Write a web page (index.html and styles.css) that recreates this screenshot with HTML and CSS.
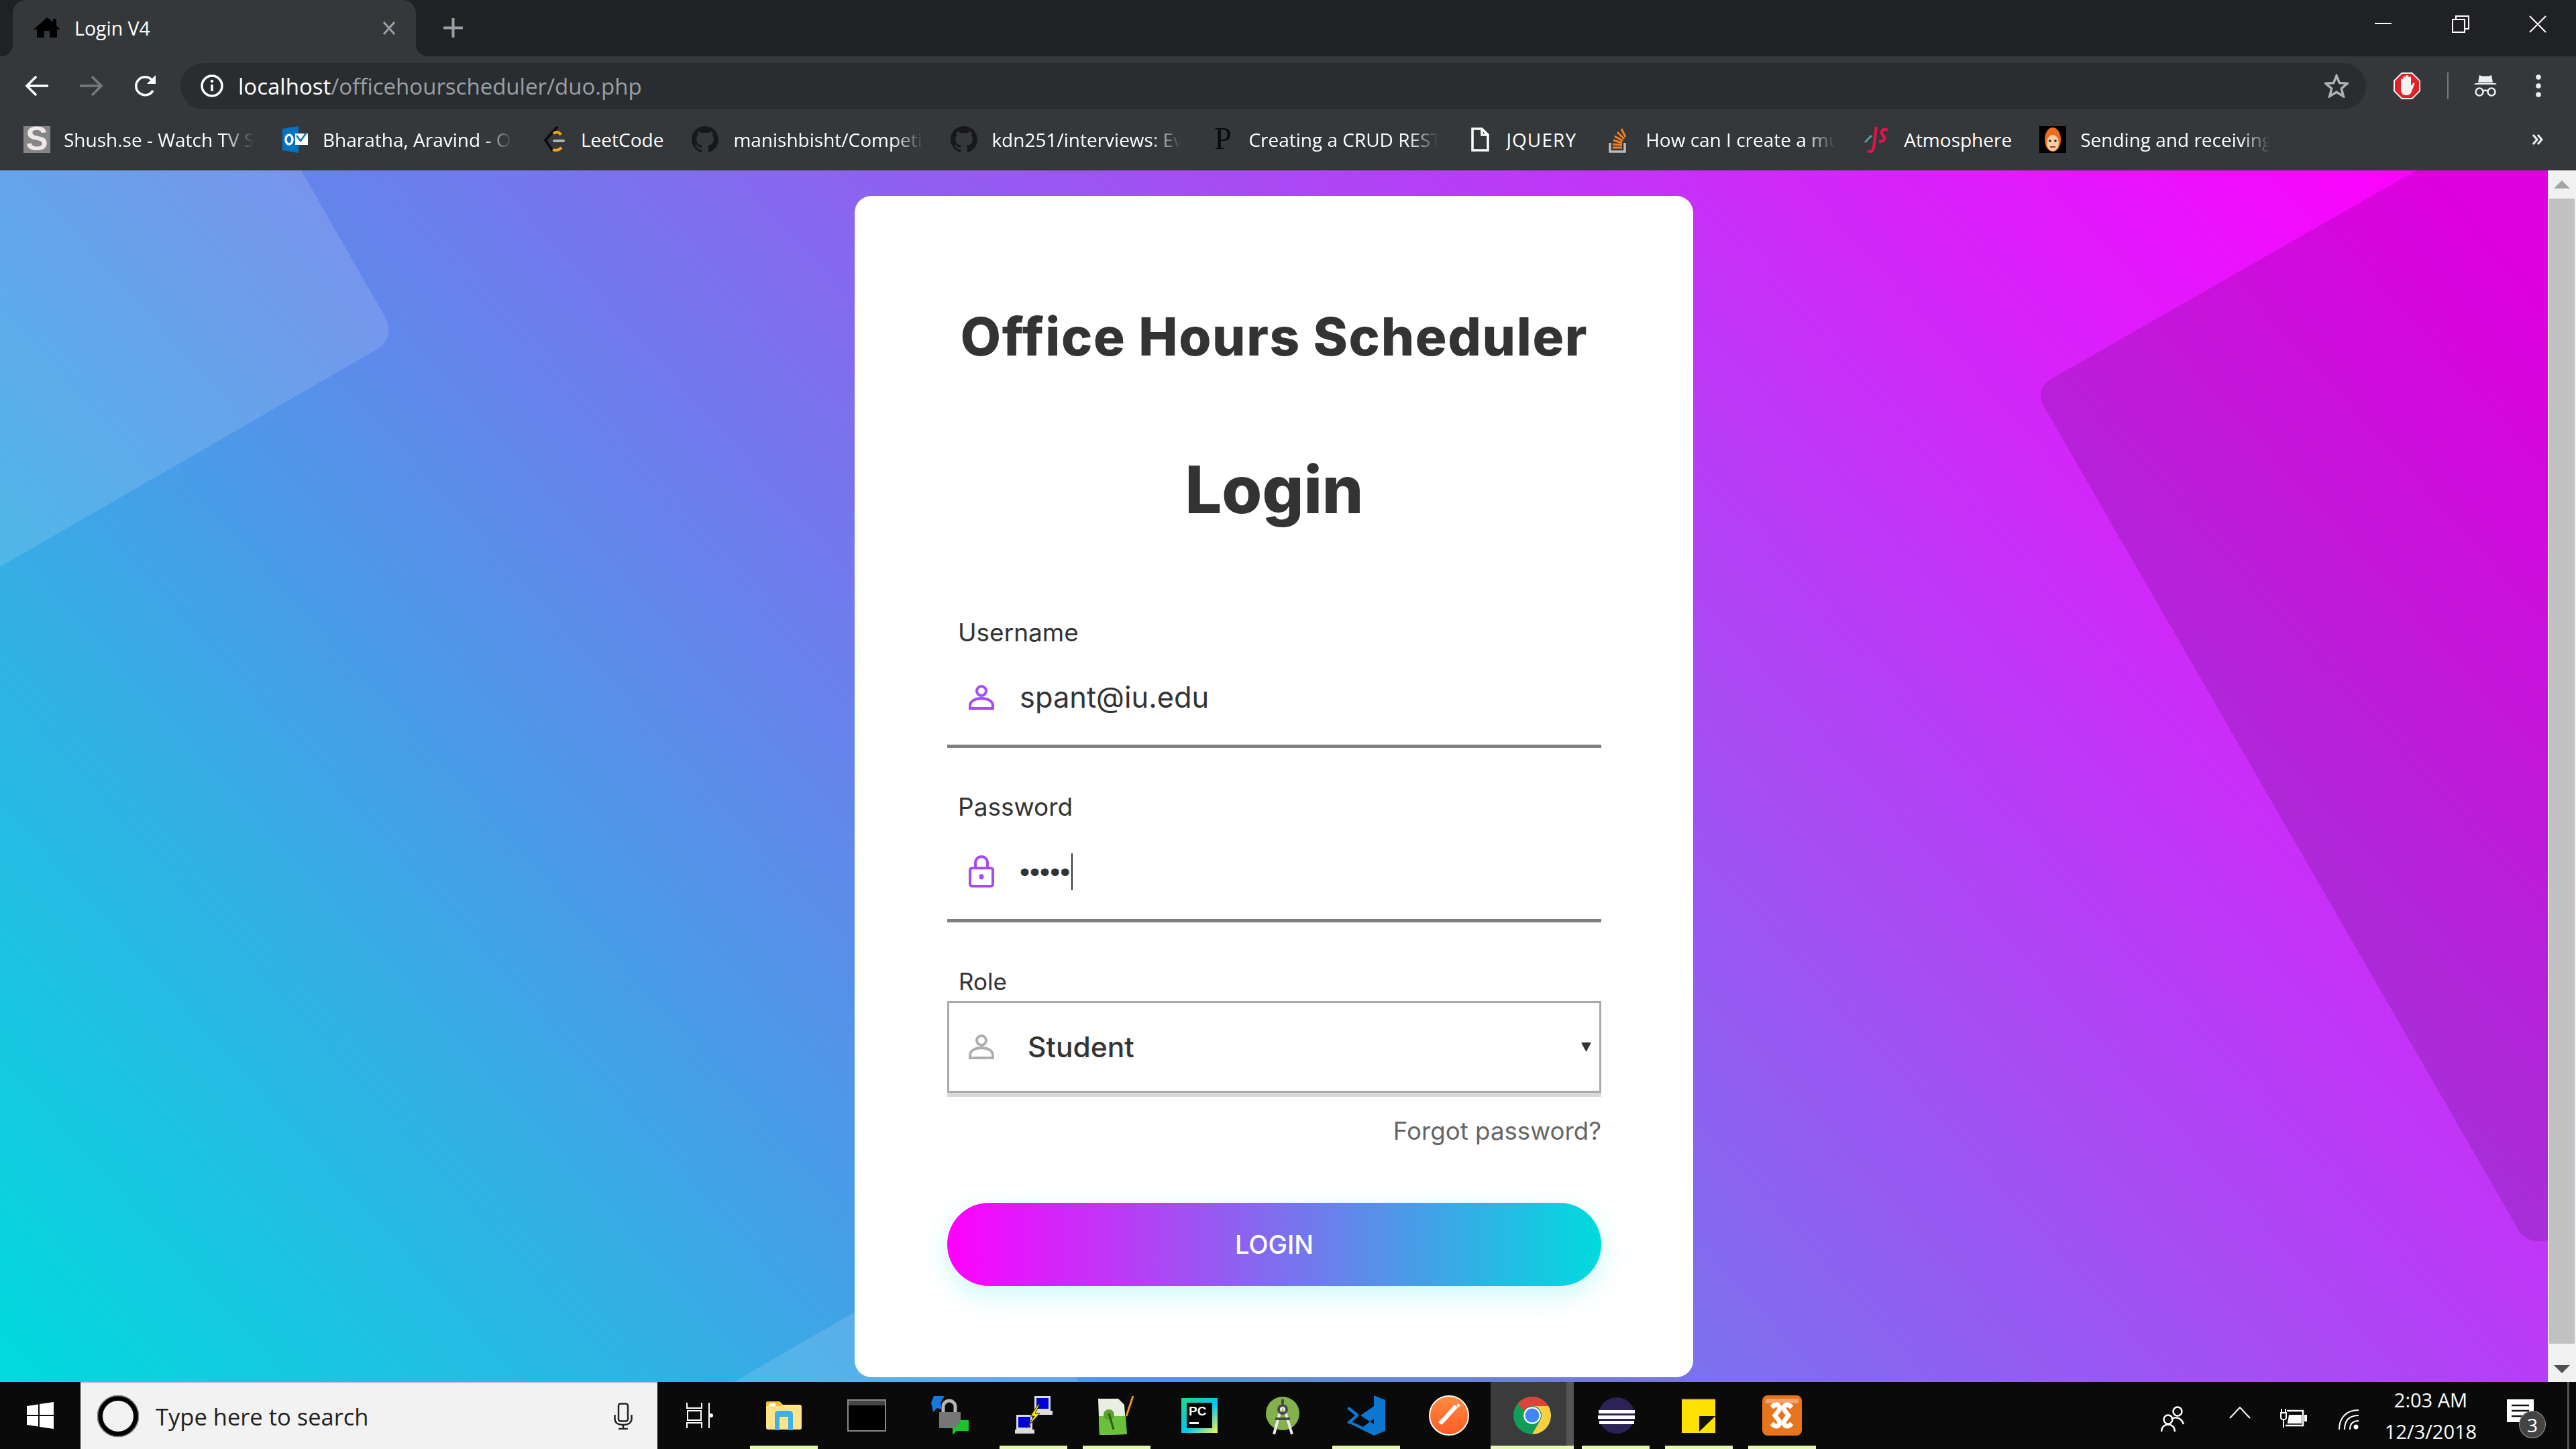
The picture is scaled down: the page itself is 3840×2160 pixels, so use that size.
FILE: index.html
```html
<!DOCTYPE html>
<html lang="en">
<head>
<meta charset="utf-8">
<title>Login V4</title>
<link rel="stylesheet" href="styles.css">
</head>
<body>
<div class="desktop">
  <header class="browser">
    <div class="tabstrip">
      <div class="tab">
        <svg class="fav-home" width="40" height="30" viewBox="0 0 40 30"><path d="M20 0l9 7V2h5v10l6 6h-5v12H24V20h-8v10H5V18H0z" fill="#000"/></svg>
        <span class="tab-title">Login V4</span>
        <svg class="tab-close" width="20" height="20" viewBox="0 0 20 20"><path d="M2 1l16 18M18 1L2 19" stroke="#9aa0a6" stroke-width="3"/></svg>
      </div>
      <svg class="new-tab" width="31" height="31" viewBox="0 0 31 31"><path d="M15.500 1v29M1 15.500h29" stroke="#9aa0a6" stroke-width="4"/></svg>
      <div class="winctl">
        <svg width="26" height="26" viewBox="0 0 26 26"><path d="M0 12h25" stroke="#fff" stroke-width="2"/></svg>
        <svg width="26" height="26" viewBox="0 0 26 26"><path d="M1 6h18v19H1zM6 6V1h19v19h-6" fill="none" stroke="#fff" stroke-width="2"/></svg>
        <svg width="26" height="26" viewBox="0 0 26 26"><path d="M1 1l24 24M25 1L1 25" stroke="#fff" stroke-width="2"/></svg>
      </div>
    </div>
    <div class="toolbar">
      <svg class="nav-back" width="34" height="32" viewBox="0 0 34 32"><path d="M34 16H3M16 2L2 16l14 14" fill="none" stroke="#fff" stroke-width="3.500"/></svg>
      <svg class="nav-fwd" width="34" height="32" viewBox="0 0 34 32"><path d="M0 16h31M18 2l14 14-14 14" fill="none" stroke="#77797b" stroke-width="3.500"/></svg>
      <svg class="nav-reload" width="34" height="34" viewBox="0 0 34 34"><path d="M28 24a13.500 13.500 0 1 1-1-15" fill="none" stroke="#fff" stroke-width="3.500"/><path d="M32 1v13H19z" fill="#fff"/></svg>
      <div class="omnibox">
        <svg width="34" height="34" viewBox="0 0 34 34"><circle cx="17" cy="17" r="15" fill="none" stroke="#fff" stroke-width="3.500"/><path d="M17 15v10" stroke="#fff" stroke-width="3.500"/><circle cx="17" cy="10" r="2.300" fill="#fff"/></svg>
        <div class="url"><span class="url-host">localhost</span><span class="url-path">/officehourscheduler/duo.php</span></div>
        <svg class="star" width="36" height="36" viewBox="0 0 36 36"><path d="M18 3l4.400 10.500 12 .9-9.100 7.600 2.900 11.500L18 27.300 7.800 33.500l2.900-11.500-9.100-7.600 12-.9z" fill="none" stroke="#aeb1b4" stroke-width="3.500"/></svg>
      </div>
      <svg class="abp" width="40" height="40" viewBox="0 0 40 40"><path d="M12 0h16l12 12v16L28 40H12L0 28V12z" fill="#f3f3f3"/><path d="M12.800 2h14.400L38 12.800v14.400L27.200 38H12.800L2 27.200V12.800z" fill="#e22127"/><path d="M11 22V10a2 2 0 0 1 3 0V8a2 2 0 0 1 4 0V6a2 2 0 0 1 4 0v2a2 2 0 0 1 4 0v12l3-4c2-1 3 0 2 2l-4 10c-1 4-4 6-8 6-5 0-8-3-8-8z" fill="#f2f2f2"/></svg>
      <span class="tb-sep"></span>
      <svg class="incog" width="34" height="32" viewBox="0 0 34 32"><path d="M8 0l4 1.500h10L26 0l2 11H6zM0 14h34l-2-2H2z" fill="#eee"/><circle cx="8" cy="25" r="5.500" fill="none" stroke="#eee" stroke-width="2.500"/><circle cx="26" cy="25" r="5.500" fill="none" stroke="#eee" stroke-width="2.500"/><path d="M13 24c2.500-1.500 5.500-1.500 8 0" fill="none" stroke="#eee" stroke-width="2.500"/></svg>
      <svg class="kebab" width="8" height="34" viewBox="0 0 8 34"><circle cx="4" cy="4" r="3.800" fill="#eee"/><circle cx="4" cy="17" r="3.800" fill="#eee"/><circle cx="4" cy="30" r="3.800" fill="#eee"/></svg>
    </div>
    <nav class="bookmarks">
      <a class="bm">
        <svg width="40" height="40" viewBox="0 0 40 40"><rect width="40" height="40" fill="#858585"/><text x="20" y="36" text-anchor="middle" font-family="Liberation Sans" font-weight="700" font-size="50" fill="#efe7ea">S</text></svg>
        <span class="bm-text fade">Shush.se - Watch TV Shows</span>
      </a>
      <a class="bm">
        <svg width="38" height="40" viewBox="0 0 38 40"><path d="M0 4l24-4v40L0 36z" fill="#0572c4"/><rect x="19" y="11" width="19" height="17" fill="#fff"/><path d="M21 14l6 8 8-11" fill="none" stroke="#0572c4" stroke-width="2.500"/><ellipse cx="10" cy="20" rx="5" ry="7" fill="none" stroke="#fff" stroke-width="3.500"/></svg>
        <span class="bm-text fade">Bharatha, Aravind - Outlook</span>
      </a>
      <a class="bm">
        <svg width="33" height="40" viewBox="0 0 33 40"><path d="M21 1L3 21l11 16" fill="none" stroke="#0d0d0d" stroke-width="4"/><path d="M15 11c4-3 8-3 11 2M14 35c5 2 9 1 13-3" fill="none" stroke="#f7a11c" stroke-width="4"/><rect x="14" y="20" width="18" height="4" rx="2" fill="#b3b3b3"/></svg>
        <span class="bm-text">LeetCode</span>
      </a>
      <a class="bm">
        <svg width="40" height="40" viewBox="0 0 16 16"><path d="M8 0C3.580 0 0 3.580 0 8c0 3.540 2.290 6.530 5.470 7.590.4.070.55-.17.55-.38 0-.19-.01-.82-.01-1.490-2.010.37-2.530-.49-2.690-.94-.09-.23-.48-.94-.82-1.130-.28-.15-.68-.52-.01-.53.63-.01 1.080.58 1.230.82.72 1.210 1.870.87 2.330.66.07-.52.28-.87.51-1.070-1.780-.2-3.640-.89-3.640-3.950 0-.87.31-1.590.82-2.150-.08-.2-.36-1.020.08-2.120 0 0 .67-.21 2.200.82.64-.18 1.320-.27 2-.27.68 0 1.360.09 2 .27 1.530-1.040 2.200-.82 2.200-.82.44 1.100.16 1.920.08 2.120.51.56.82 1.270.82 2.150 0 3.070-1.870 3.750-3.650 3.950.29.25.54.73.54 1.480 0 1.070-.01 1.930-.01 2.200 0 .21.15.46.55.38A8.013 8.013 0 0 0 16 8c0-4.420-3.580-8-8-8z" fill="#18181b"/></svg>
        <span class="bm-text fade">manishbisht/Competitive</span>
      </a>
      <a class="bm">
        <svg width="40" height="40" viewBox="0 0 16 16"><path d="M8 0C3.580 0 0 3.580 0 8c0 3.540 2.290 6.530 5.470 7.590.4.070.55-.17.55-.38 0-.19-.01-.82-.01-1.490-2.010.37-2.530-.49-2.690-.94-.09-.23-.48-.94-.82-1.130-.28-.15-.68-.52-.01-.53.63-.01 1.080.58 1.230.82.72 1.210 1.870.87 2.330.66.07-.52.28-.87.51-1.070-1.780-.2-3.640-.89-3.640-3.950 0-.87.31-1.590.82-2.150-.08-.2-.36-1.020.08-2.120 0 0 .67-.21 2.200.82.64-.18 1.320-.27 2-.27.68 0 1.360.09 2 .27 1.530-1.040 2.200-.82 2.200-.82.44 1.100.16 1.920.08 2.120.51.56.82 1.270.82 2.150 0 3.070-1.870 3.750-3.650 3.950.29.25.54.73.54 1.480 0 1.070-.01 1.930-.01 2.200 0 .21.15.46.55.38A8.013 8.013 0 0 0 16 8c0-4.420-3.580-8-8-8z" fill="#18181b"/></svg>
        <span class="bm-text fade">kdn251/interviews: Everything</span>
      </a>
      <a class="bm">
        <svg width="28" height="40" viewBox="0 0 28 40"><text x="14" y="34" text-anchor="middle" font-family="Liberation Serif" font-size="46" fill="#0a0a0a">P</text></svg>
        <span class="bm-text fade">Creating a CRUD RESTful API</span>
      </a>
      <a class="bm">
        <svg width="27" height="36" viewBox="0 0 27 36"><path d="M2 2h14l9 9v23H2zM16 2v9h9" fill="none" stroke="#fff" stroke-width="3.500"/></svg>
        <span class="bm-text bm-caps">JQUERY</span>
      </a>
      <a class="bm">
        <svg width="28" height="40" viewBox="0 0 28 40"><path d="M2 25v13h22V25" fill="none" stroke="#bcbbbb" stroke-width="3.500"/><path d="M6 32h14M6 27l14 1M7 21l13 4M9 15l12 7M13 9l10 10M19 4l6 12" stroke="#f48024" stroke-width="3"/></svg>
        <span class="bm-text fade">How can I create a multipart</span>
      </a>
      <a class="bm">
        <svg width="36" height="40" viewBox="0 0 36 40"><path d="M18 1L14 32c-1 6-5 7-9 5" fill="none" stroke="#e8124f" stroke-width="4"/><path d="M35 6c-9-4-11 4-7 8s3 9-6 9" fill="none" stroke="#e8124f" stroke-width="4"/><path d="M1 24l10-10" stroke="#4fa3a8" stroke-width="3"/></svg>
        <span class="bm-text">Atmosphere</span>
      </a>
      <a class="bm">
        <svg width="40" height="40" viewBox="0 0 40 40"><rect width="40" height="40" fill="#000"/><ellipse cx="20" cy="20" rx="12" ry="18" fill="#ef6c1a"/><ellipse cx="20" cy="25" rx="9" ry="12" fill="#fbcfa0"/><circle cx="16" cy="22" r="1.800" fill="#222"/><circle cx="24" cy="22" r="1.800" fill="#222"/><path d="M16 31h8" stroke="#a33" stroke-width="2"/></svg>
        <span class="bm-text fade">Sending and receiving messages</span>
      </a>
      <svg class="bm-more" width="16" height="16" viewBox="0 0 16 16"><path d="M1 1l6 7-6 7M8 1l6 7-6 7" fill="none" stroke="#eee" stroke-width="3"/></svg>
    </nav>
  </header>

  <div class="viewport">
    <main class="page">
      <svg class="bg-shapes" viewBox="0 0 3798 1806" preserveAspectRatio="none">
        <path class="shape-light" d="M0 0H449L572 215Q592 250 558 269L0 591Z"/>
        <path class="shape-light" d="M1094 1806L1450 1600L1608 1806Z"/>
        <path class="shape-dark" d="M3602 0H3800V1595Q3770 1600 3757 1584L3048 354Q3032 326 3059 310Z"/>
      </svg>
      <form class="card">
        <h1 class="app-title">Office Hours Scheduler</h1>
        <h2 class="login-title">Login</h2>

        <div class="field">
          <div class="field-label">Username</div>
          <div class="field-row">
            <svg class="field-icon" width="38" height="37" viewBox="0 0 38 37"><circle cx="19" cy="9" r="7" fill="none" stroke="currentColor" stroke-width="4"/><path d="M2 35v-4c0-7 8-11 17-11s17 4 17 11v4z" fill="none" stroke="currentColor" stroke-width="4"/></svg>
            <span class="field-value">spant@iu.edu</span>
          </div>
        </div>

        <div class="field">
          <div class="field-label">Password</div>
          <div class="field-row">
            <svg class="field-icon" width="38" height="48" viewBox="0 0 38 48"><path d="M10 20v-9a9 9 0 0 1 18 0v9" fill="none" stroke="currentColor" stroke-width="4"/><rect x="2" y="19" width="34" height="27" rx="3" fill="none" stroke="currentColor" stroke-width="4"/><ellipse cx="19" cy="32" rx="3.500" ry="4" fill="currentColor"/></svg>
            <span class="field-dots">•••••</span><span class="caret"></span>
          </div>
        </div>

        <div class="field">
          <div class="field-label field-label-role">Role</div>
          <div class="select">
            <svg class="select-icon" width="38" height="37" viewBox="0 0 38 37"><circle cx="19" cy="9" r="7" fill="none" stroke="currentColor" stroke-width="4"/><path d="M2 35v-4c0-7 8-11 17-11s17 4 17 11v4z" fill="none" stroke="currentColor" stroke-width="4"/></svg>
            <span class="select-value">Student</span>
            <svg class="select-arrow" width="15" height="14" viewBox="0 0 15 14"><path d="M0 0h15L7.500 14z" fill="#333"/></svg>
          </div>
        </div>

        <a class="forgot">Forgot password?</a>
        <button class="login-btn" type="button">LOGIN</button>
      </form>
    </main>
    <aside class="scrollbar">
      <div class="sb-btn"><svg width="24" height="12" viewBox="0 0 24 12"><path d="M0 12L12 0l12 12z" fill="#a3a3a3"/></svg></div>
      <div class="sb-thumb"></div>
      <div class="sb-btn sb-btn-down"><svg width="24" height="12" viewBox="0 0 24 12"><path d="M0 0l12 12L24 0z" fill="#505050"/></svg></div>
    </aside>
  </div>

  <footer class="taskbar">
    <div class="start">
      <svg width="40" height="40" viewBox="0 0 40 40"><path d="M0 6l17-2.500V19H0zM19 3L40 0v19H19zM0 21h17v15.500L0 34zM19 21h21v19l-21-3z" fill="#fff"/></svg>
    </div>
    <div class="search">
      <svg class="cortana" width="62" height="64" viewBox="0 0 62 64"><circle cx="31" cy="32" r="27" fill="none" stroke="#000" stroke-width="8"/><circle cx="31" cy="32" r="30.500" fill="none" stroke="#808080" stroke-width="1.500"/></svg>
      <span class="search-text">Type here to search</span>
      <svg class="mic" width="28" height="40" viewBox="0 0 28 40"><rect x="7" y="1.500" width="14" height="26" rx="3" fill="none" stroke="#222" stroke-width="2.500"/><path d="M1.500 18v6c0 6 5 9 12.500 9s12.500-3 12.500-9v-6M14 33v5M7 39h14" fill="none" stroke="#222" stroke-width="2.500"/></svg>
    </div>
    <div class="taskview">
      <svg width="40" height="40" viewBox="0 0 40 40"><path d="M1 1v8h22V1M1 39v-8h22v8M2 13h20v14H2zM34 1v38" fill="none" stroke="#fff" stroke-width="2"/><circle cx="37" cy="20" r="3" fill="#fff"/></svg>
    </div>
    <div class="apps">
      <div class="app app-on"><svg width="53" height="44" viewBox="0 0 53 44"><path d="M0 4a3 3 0 0 1 3-3h17l5 5h25a3 3 0 0 1 3 3v31a3 3 0 0 1-3 3H3a3 3 0 0 1-3-3z" fill="#ffe388"/><path d="M0 4a3 3 0 0 1 3-3h17l4 7H0z" fill="#f7c033"/><rect x="4" y="4" width="10" height="4" fill="#fff"/><path d="M13 44V20a5 5 0 0 1 5-5h17a5 5 0 0 1 5 5v24h-7V24H20v20z" fill="#3eb2e8"/></svg></div>
      <div class="app"><svg width="58" height="48" viewBox="0 0 58 48"><rect x="1" y="1" width="56" height="46" fill="#000" stroke="#8a8a8a" stroke-width="2"/><rect x="2" y="2" width="54" height="7" fill="#454545"/></svg></div>
      <div class="app"><svg width="56" height="58" viewBox="0 0 56 58"><path d="M18 24v-8a9 9 0 0 1 18 0v8" fill="none" stroke="#b5b5b5" stroke-width="5"/><rect x="12" y="24" width="32" height="24" fill="#767676"/><path d="M0 10L4 0h16l-6 10 2 10-7-2-6 6z" fill="#1778e0"/><path d="M56 36v16H38l-6 6 0-10 6-2 6-10z" fill="#17c52c"/></svg></div>
      <div class="app app-on"><svg width="57" height="58" viewBox="0 0 57 58"><path d="M30 0h24v22h3v6H31v-6h-1z" fill="#ddd"/><rect x="33" y="3" width="18" height="16" fill="#0000d8"/><path d="M3 28h24v22h3v6H1v-6h2z" fill="#ddd"/><rect x="6" y="31" width="18" height="16" fill="#0000d8"/><path d="M36 12L24 30h6L18 48l20-22h-7l7-14z" fill="#ffe600" stroke="#222" stroke-width="1"/></svg></div>
      <div class="app app-on"><svg width="55" height="58" viewBox="0 0 55 58"><path d="M0 4h30l9 9 3 44-40 1z" fill="#e8efe2"/><path d="M1 30h40l2 27-41 1z" fill="#6cc13c"/><circle cx="16" cy="28" r="8" fill="#5aa32c"/><path d="M16 26l7 24" stroke="#2d5a12" stroke-width="3"/><path d="M52 0L42 30" stroke="#e59a1c" stroke-width="3"/></svg></div>
      <div class="app"><svg width="54" height="52" viewBox="0 0 54 52"><defs><linearGradient id="pc" x1="0" y1="0" x2="1" y2="1"><stop offset="0" stop-color="#21d789"/><stop offset=".55" stop-color="#07c3f2"/><stop offset="1" stop-color="#fcf84a"/></linearGradient></defs><rect width="54" height="52" fill="url(#pc)"/><rect x="8" y="7" width="38" height="38" fill="#000"/><text x="11" y="26" font-family="Liberation Sans" font-weight="700" font-size="19" fill="#fff">PC</text><rect x="12" y="36" width="14" height="3" fill="#fff"/></svg></div>
      <div class="app"><svg width="50" height="58" viewBox="0 0 50 58"><circle cx="25" cy="26" r="25" fill="#83b14c"/><path d="M25 10l-13 47M25 10l14 47" stroke="#ececec" stroke-width="4" fill="none"/><circle cx="25" cy="20" r="6" fill="none" stroke="#4a4a4a" stroke-width="4"/><path d="M25 5v8M14 34h22" stroke="#4a4a4a" stroke-width="4"/></svg></div>
      <div class="app app-on"><svg width="57" height="60" viewBox="0 0 57 60"><path d="M40 0l17 7v46l-17 7L0 40l4-2 20 9 16-12zM40 16L20 30l20 13z" fill="#0a78d1" fill-rule="evenodd"/><path d="M3 17l-3 3 12 10-12 10 3 3 14-12v-3z" fill="#0a78d1"/></svg></div>
      <div class="app"><svg width="60" height="60" viewBox="0 0 60 60"><defs><linearGradient id="pm" x1="0" y1="0" x2="0" y2="1"><stop offset="0" stop-color="#ff8c42"/><stop offset="1" stop-color="#ff5a24"/></linearGradient></defs><circle cx="30" cy="30" r="29" fill="url(#pm)" stroke="#fff" stroke-width="2"/><path d="M38 14L20 34l-6 6 5 4 6-6 18-20zM44 12l3 3-3 3-3-3z" fill="#fff"/></svg></div>
      <div class="app app-active app-on"><svg width="56" height="56" viewBox="0 0 48 48"><circle cx="24" cy="24" r="24" fill="#0f9d58"/><path d="M24 0a24 24 0 0 1 20.800 12H24a12 12 0 0 0-10.400 6L5.600 8.600A24 24 0 0 1 24 0z" fill="#db4437"/><path d="M44.800 12A24 24 0 0 1 24 48l10.400-18A12 12 0 0 0 24 12z" fill="#ffcd40"/><circle cx="24" cy="24" r="11" fill="#fff"/><circle cx="24" cy="24" r="9" fill="#4285f4"/></svg></div>
      <div class="app app-on"><svg width="58" height="58" viewBox="0 0 58 58"><path d="M29 0a29 29 0 0 0 0 58A29 29 0 0 1 29 0z" fill="#f7941e"/><circle cx="31" cy="29" r="27" fill="#2c2255"/><path d="M4 21h54v5H4zM3 29h55v5H3zM5 37h52v5H5z" fill="#fff"/></svg></div>
      <div class="app app-on"><svg width="50" height="52" viewBox="0 0 50 52"><rect width="50" height="52" fill="#ffe100"/><rect width="50" height="2" fill="#222"/><path d="M26 50V27h24z" fill="#111"/></svg></div>
      <div class="app app-on"><svg width="59" height="60" viewBox="0 0 59 60"><rect width="59" height="60" rx="8" fill="#e8741e"/><path d="M5 5h49v7H5z" fill="#f2a46a"/><path d="M14 18c8-8 14-2 11 4l-6 8 6 8c3 6-3 12-11 4M44 18c-8-8-14-2-11 4l6 8-6 8c-3 6 3 12 11 4" fill="none" stroke="#fff" stroke-width="7"/></svg></div>
    </div>
    <div class="tray">
      <svg class="tray-people" width="36" height="38" viewBox="0 0 36 38"><circle cx="25" cy="8" r="6.500" fill="none" stroke="#fff" stroke-width="2.500"/><path d="M16 20c2-4 14-5 18 7" fill="none" stroke="#fff" stroke-width="2.500"/><circle cx="11" cy="20" r="6.500" fill="none" stroke="#fff" stroke-width="2.500"/><path d="M1 38c0-14 20-14 20 0" fill="none" stroke="#fff" stroke-width="2.500"/></svg>
      <svg class="tray-chev" width="32" height="18" viewBox="0 0 32 18"><path d="M1 17L16 1l15 16" fill="none" stroke="#fff" stroke-width="2"/></svg>
      <svg class="tray-bat" width="40" height="28" viewBox="0 0 40 28"><path d="M10 3h24v22H8" fill="none" stroke="#fff" stroke-width="2.500"/><path d="M13 9h19v13H11z" fill="#fff"/><rect x="36" y="9" width="4" height="10" fill="#fff"/><path d="M2 0v6M8 0v6M1 6h8v7c0 2-2 3-4 3s-4-1-4-3zM5 16v12" fill="none" stroke="#fff" stroke-width="2"/></svg>
      <svg class="tray-wifi" width="30" height="30" viewBox="0 0 30 30"><path d="M1 30C1 12 12 1 30 1M9 30C9 16 16 9 30 9M17 30c0-9 4-13 13-13" fill="none" stroke="#fff" stroke-width="2"/><circle cx="26" cy="26" r="3.500" fill="#fff"/></svg>
      <div class="clock"><span>2:03 AM</span><span>12/3/2018</span></div>
      <div class="notif">
        <svg width="40" height="34" viewBox="0 0 40 34"><path d="M0 0h40v34H0z" fill="#fff"/><path d="M7 9h26M7 17h26M7 25h26" stroke="#111" stroke-width="2.500"/></svg>
        <span class="notif-badge">3</span>
      </div>
      <span class="tray-edge"></span>
    </div>
  </footer>
</div>
</body>
</html>
```
FILE: styles.css
```css
* { box-sizing: border-box; }
html, body { margin: 0; height: 100%; overflow: hidden; }
.desktop { height: 100vh; display: flex; flex-direction: column; font-family: "Open Sans", sans-serif; }

/* Browser chrome */
.browser { height: 254px; flex: none; background: #35383b; color: #fff; }
.tabstrip { height: 84px; background: #202124; display: flex; align-items: center; padding-left: 19px; }
.tab { position: relative; width: 601px; height: 84px; background: #35383b; border-radius: 20px 20px 0 0; display: flex; align-items: center; padding: 0 30px 0 31px; }
.tab::before, .tab::after { content: ""; position: absolute; bottom: 0; width: 18px; height: 18px; }
.tab::before { left: -18px; background: radial-gradient(circle at 0 0, transparent 18px, #35383b 18.500px); }
.tab::after { right: -18px; background: radial-gradient(circle at 100% 0, transparent 18px, #35383b 18.500px); }
.fav-home { flex: none; margin-top: -2px; }
.tab-title { font-size: 28.500px; margin-left: 21px; flex: 1; }
.tab-close { flex: none; }
.new-tab { flex: none; margin-left: 40px; margin-top: -2px; }
.winctl { margin-left: auto; display: flex; gap: 89px; padding-right: 44px; margin-top: -12px; }

.toolbar { height: 88px; display: flex; align-items: center; padding-left: 38px; }
.nav-fwd { margin-left: 47px; }
.nav-reload { margin-left: 47px; }
.omnibox { width: 3258px; height: 69px; margin-left: 35px; background: #2a2d30; border-radius: 35px; display: flex; align-items: center; padding-left: 30px; padding-right: 26px; }
.url { font-size: 33px; margin-left: 22px; flex: 1; white-space: nowrap; }
.url-host { color: #fff; }
.url-path { color: #9ba0a5; }
.abp { margin-left: 41px; flex: none; }
.tb-sep { width: 2px; height: 40px; background: #77797b; margin-left: 40px; flex: none; }
.incog { margin-left: 38px; flex: none; }
.kebab { margin-left: 58px; flex: none; }

.bookmarks { height: 82px; display: flex; align-items: center; padding: 0 49px 10px 35px; }
.bm { display: flex; align-items: center; flex: none; color: #fff; }
.bm-text { font-size: 28px; white-space: nowrap; overflow: hidden; max-width: 283px; line-height: 40px; }
.bm-caps { letter-spacing: 1.100px; }
.fade { width: 283px; -webkit-mask-image: linear-gradient(to right, #000 84%, transparent 100%); mask-image: linear-gradient(to right, #000 84%, transparent 100%); }
.bm-more { margin-left: auto; flex: none; }
/* Favicon-to-label gaps and spacing between bookmarks */
.bm:nth-child(1) svg { margin-right: 20px; }
.bm:nth-child(2) { margin-left: 43px; }
.bm:nth-child(2) svg { margin-right: 22px; }
.bm:nth-child(3) { margin-left: 46px; }
.bm:nth-child(3) svg { margin-right: 23px; }
.bm:nth-child(4) { margin-left: 42px; }
.bm:nth-child(4) svg { margin-right: 22px; }
.bm:nth-child(5) { margin-left: 41px; }
.bm:nth-child(5) svg { margin-right: 21px; }
.bm:nth-child(6) { margin-left: 48px; }
.bm:nth-child(6) svg { margin-right: 24px; }
.bm:nth-child(7) { margin-left: 49px; }
.bm:nth-child(7) svg { margin-right: 25px; }
.bm:nth-child(8) { margin-left: 48px; }
.bm:nth-child(8) svg { margin-right: 27px; }
.bm:nth-child(9) { margin-left: 43px; }
.bm:nth-child(9) svg { margin-right: 23px; }
.bm:nth-child(10) { margin-left: 41px; }
.bm:nth-child(10) svg { margin-right: 21px; }

/* Page */
.viewport { flex: 1; min-height: 0; display: flex; }
.page { flex: 1; min-width: 0; position: relative; overflow: hidden; padding-top: 38px; display: flex; justify-content: center; align-items: flex-start; background: linear-gradient(48deg, #00dbde 0%, #ff00ff 97%); }
.bg-shapes { position: absolute; left: 0; top: 0; width: 100%; height: 100%; }
.shape-light { fill: rgba(255, 255, 255, .13); }
.shape-dark { fill: rgba(0, 0, 0, .13); }

.scrollbar { width: 42px; flex: none; background: #f1f1f1; display: flex; flex-direction: column; padding: 0 2px; }
.sb-btn { height: 42px; flex: none; display: flex; align-items: center; justify-content: center; }
.sb-btn-down { height: 57px; align-items: flex-end; padding-bottom: 13px; }
.sb-thumb { flex: 1; background: #c1c1c1; }

/* Card */
.card { position: relative; width: 1250px; background: #fff; border-radius: 25px; padding: 160px 137px 136px 138px; font-family: Inter, sans-serif; color: #333; }
.app-title { margin: 0; text-align: center; font-size: 78px; line-height: 100px; font-weight: 800; letter-spacing: 1.600px; white-space: nowrap; }
.login-title { margin: 118px 0 128px; text-align: center; font-size: 97px; line-height: 120px; font-weight: 800; }
.field + .field { margin-top: 63px; }
.field-label { font-size: 37px; line-height: 50px; padding-left: 16px; }
.field-label-role { font-size: 35px; padding-left: 17px; }
.field-row { height: 147px; border-bottom: 5px solid #808080; display: flex; align-items: center; padding-left: 32px; }
.field-icon { color: #a64bf4; flex: none; }
.field-value { margin-left: 38px; font-size: 43.400px; line-height: 50px; }
.field-dots { margin-left: 38px; font-family: "Liberation Sans", sans-serif; font-size: 43px; line-height: 50px; }
.caret { width: 2px; height: 55px; background: #333; margin-left: 2px; }
.select { margin-top: 4px; height: 137px; border: 3px solid #a9a9a9; box-shadow: 0 6px 0 #d9d9d9; display: flex; align-items: center; padding: 0 12px 0 29px; }
.select-icon { color: #adadad; flex: none; }
.select-value { margin-left: 50px; font-size: 42.500px; line-height: 50px; font-weight: 500; }
.select-arrow { margin-left: auto; flex: none; }
.forgot { display: block; margin-top: 32px; text-align: right; font-size: 36.700px; line-height: 50px; color: #666; }
.login-btn { display: block; width: 100%; height: 124px; margin-top: 82px; border: 0; border-radius: 62px; background: linear-gradient(to right, #ff00ff, #00dbde); box-shadow: 0 14px 40px rgba(0, 219, 222, .2); color: #fff; font-family: Inter, sans-serif; font-size: 38px; font-weight: 500; padding: 0; }

/* Taskbar */
.taskbar { height: 100px; flex: none; background: #0a0a0a; display: flex; align-items: center; }
.start { width: 120px; height: 100%; flex: none; display: flex; align-items: center; justify-content: center; }
.search { width: 860px; height: 100%; flex: none; background: #f2f2f2; border-top: 2px solid #c8c8c8; display: flex; align-items: center; padding: 0 37px 0 25px; }
.cortana { flex: none; }
.search-text { margin-left: 25px; font-size: 34.500px; color: #222; flex: 1; }
.mic { flex: none; }
.taskview { width: 126px; height: 100%; flex: none; display: flex; align-items: center; justify-content: center; }
.apps { display: flex; height: 100%; flex: none; }
.app { position: relative; width: 124px; height: 100%; display: flex; align-items: center; justify-content: center; }
.app-on::after { content: ""; position: absolute; left: 12px; right: 11px; bottom: 0; height: 5px; background: #e6f8b0; }
.app-active { background: linear-gradient(to right, #3b3b3b 91%, #555 91%); }
.app-active::after { left: 0; right: 0; }
.tray { margin-left: auto; display: flex; align-items: center; height: 100%; padding-right: 45px; position: relative; color: #fff; }
.tray-chev { margin-left: 66px; margin-top: -8px; flex: none; }
.tray-bat { margin-left: 44px; flex: none; margin-top: 8px; }
.tray-wifi { margin-left: 47px; flex: none; margin-top: 12px; }
.tray-people { margin-top: 10px; flex: none; }
.clock { margin-left: 40px; width: 135px; display: flex; flex-direction: column; align-items: center; font-size: 29px; line-height: 47px; white-space: nowrap; }
.notif { position: relative; margin-left: 46px; width: 58px; height: 58px; margin-top: 10px; }
.notif svg { display: block; }
.notif-badge { position: absolute; left: 18px; top: 17px; width: 40px; height: 41px; border-radius: 50%; background: #444; border: 1px solid #999; display: flex; align-items: center; justify-content: center; font-size: 28px; color: #fff; }
.tray-edge { position: absolute; right: 10px; top: 0; bottom: 0; width: 3px; background: #555; }
```
